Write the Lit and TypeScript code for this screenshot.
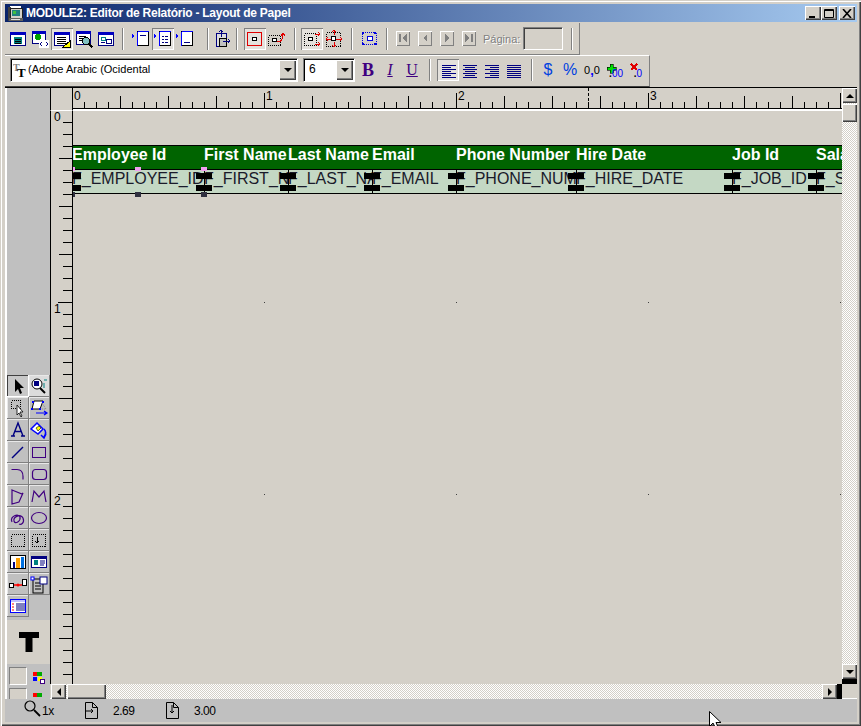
import { LitElement, html, svg, css } from 'lit';
import { customElement } from 'lit/decorators.js';

const NAVY = '#000080';
const BLUE = '#0000ff';
const RED = '#ff0000';
const PURPLE = '#400080';

// small shared pieces for the 20x20 toolbar icons
const win = (x = 2, y = 3, w = 16, h = 14) => svg`
  <rect x=${x + 0.5} y=${y + 0.5} width=${w - 1} height=${h - 1} fill="#fff" stroke=${NAVY}/>
  <rect x=${x} y=${y} width=${w} height="3" fill="#0000c0"/>
`;
const lines = (x: number, y: number, w: number, n: number, c = '#000', step = 2) => {
  const out = [];
  for (let i = 0; i < n; i++) out.push(svg`<rect x=${x} y=${y + i * step} width=${w} height="1" fill=${c}/>`);
  return out;
};
const dotted = (x: number, y: number, w: number, h: number, c = '#000') => svg`
  <rect x=${x + 0.5} y=${y + 0.5} width=${w} height=${h} fill="none" stroke=${c} stroke-dasharray="1 1" shape-rendering="crispEdges"/>
`;
const sideDoc = (body: unknown) => svg`
  <path d="M1 5l3 2-3 2z" fill=${BLUE}/>
  <rect x="6.5" y="2.5" width="11" height="14" fill="#fff" stroke="#000"/>
  <path d="M6.5 2.5h11M6.5 2.5v14" stroke=${BLUE} fill="none"/>
  ${body}
`;
// justified lines, every second one short
const aligned = (x: number, shortX: number, shortW: number) => {
  const out = [];
  for (let i = 0; i < 7; i++) {
    out.push(i % 2 ? svg`<rect x=${shortX} y=${5 + i * 2} width=${shortW} height="1" fill=${NAVY}/>`
                   : svg`<rect x=${x} y=${5 + i * 2} width="14" height="1" fill=${NAVY}/>`);
  }
  return out;
};

const ICONS: Record<string, unknown> = {
  form: svg`${win()}<rect x="6" y="8" width="8" height="7" fill="#008080"/><path d="M7 10h6M7 12h6M7 14h6" stroke="#000"/>`,
  web: svg`${win(2, 2, 14, 13)}<circle cx="8" cy="8" r="3" fill="#00a000"/><rect x="9" y="11" width="10" height="8" fill="#fff"/><path d="M12 13l-2 2 2 2M16 13l2 2-2 2" stroke=${NAVY} fill="none"/>`,
  report: svg`${win()}${lines(5, 8, 9, 4)}<path d="M18 12v6h-7z" fill="#ffff00" stroke="#000"/>`,
  preview: svg`${win(2, 2, 15, 14)}${lines(5, 7, 7, 3)}<circle cx="12" cy="12" r="3.5" fill="#80c0c0" stroke="#000"/><path d="M14.5 14.5l4 4" stroke="#000" stroke-width="2"/>`,
  layout: svg`${win()}<rect x="5.5" y="8.5" width="4" height="3" fill="#fff" stroke="#008080"/><rect x="10.5" y="10.5" width="5" height="4" fill="#fff" stroke=${NAVY}/><path d="M5 13h4" stroke=${NAVY}/>`,
  marginTop: sideDoc(svg`<path d="M9 6h6" stroke=${NAVY}/>`),
  marginBody: sideDoc(svg`<path d="M9 7h2M12 7h3M9 10h2M12 10h3M9 13h2M12 13h3" stroke=${NAVY}/>`),
  marginBottom: sideDoc(svg`<path d="M9 13h6" stroke=${NAVY}/>`),
  anchor: svg`<rect x="5.5" y="4.5" width="10" height="13" fill="#ddd" stroke=${NAVY}/><rect x="8" y="9" width="7" height="8" fill="#c0c0c0" stroke="#000"/><path d="M10 1v7M8 3l2-2 2 2M12 12h7M17 10l2 2-2 2" stroke=${NAVY} fill="none"/>`,
  frame: svg`<rect x="2.5" y="3.5" width="14" height="13" fill="none" stroke="#e00000"/><rect x="7.5" y="8.5" width="4" height="3" fill="#fff" stroke="#000"/>`,
  frameCurve: svg`${dotted(1, 6, 12, 10)}<rect x="5.5" y="9.5" width="4" height="3" fill="#fff" stroke="#000"/><path d="M10 13c5 0 6-3 6-7M14 7l2-3 2 3" stroke="#e00000" fill="none"/>`,
  expandRight: svg`${dotted(2, 4, 12, 12)}<rect x="6.5" y="8.5" width="4" height="3" fill="#fff" stroke="#000"/><path d="M13 5h5M16 3l2 2-2 2M13 15h5M16 13l2 2-2 2" stroke="#e00000" fill="none"/>`,
  expandAll: svg`${dotted(2, 3, 14, 14, '#000')}<rect x="7.5" y="7.5" width="4" height="4" fill="#fff" stroke="#000"/><path d="M10 1v5M8 3l2-2 2 2M10 13v5M8 16l2 2 2-2M2 10h5M4 8l-2 2 2 2M12 10h6M16 8l2 2-2 2" stroke="#e00000" fill="none"/>`,
  blueFrame: svg`${dotted(3, 3, 14, 12, '#0000e0')}<rect x="8.5" y="7.5" width="5" height="4" fill="#fff" stroke="#0000e0"/><path d="M3 3h2v2h-2zM15 3h2v2h-2zM3 14h2v2h-2zM15 14h2v2h-2z" fill="#0000e0"/>`,
  // first four are drawn on the 14px face of the page buttons
  first: svg`<path d="M3 3h2v8H3zM11 3v8L6 7z" fill="#808080"/>`,
  prev: svg`<path d="M9 3v8L5 7z" fill="#808080"/>`,
  next: svg`<path d="M5 3v8l4-4z" fill="#808080"/>`,
  last: svg`<path d="M9 3h2v8H9zM3 3v8l5-4z" fill="#808080"/>`,
  alignLeft: aligned(4, 4, 9),
  alignCenter: aligned(3, 5, 10),
  alignRight: aligned(3, 8, 9),
  alignFull: lines(3, 5, 14, 7, NAVY),
  plusDec: svg`<path d="M6 4h3v3h3v3H9v3H6v-3H3V7h3z" fill="#00e000" stroke="#000" stroke-width=".6"/>`,
  crossDec: svg`<path d="M5 4l6 6M11 4l-6 6" stroke="#e00000" stroke-width="2.500"/>`,
  // tool palette
  pointer: svg`<path d="M7 3v13l3-3 2 5 2-1-2-5h4z" fill="#000"/>`,
  zoom: svg`<circle cx="8" cy="8" r="5" fill="#fff" stroke="#000"/><rect x="5" y="5" width="5" height="5" fill=${NAVY}/><path d="M11 12l5 5" stroke="#000" stroke-width="2"/><path d="M15 4h3M15 7v5" stroke="#008080"/>`,
  marquee: svg`${dotted(3, 2, 9, 8)}<path d="M9 7v10l2-2 2 4 1-1-2-4h3z" fill="#fff" stroke="#000" stroke-width=".8"/>`,
  rotate: svg`<path d="M5 3h9l-3 8H3z" fill="#fff" stroke="#000"/><path d="M3 3h2v2H3zM13 3h2v2h-2zM2 10h2v2H2zM10 10h2v2h-2z" fill=${BLUE}/><path d="M13 5l4 6h-5" fill="none" stroke="#808080" stroke-dasharray="1 1"/><path d="M7 15h10M15 13l3 2-3 2" stroke=${BLUE} fill="none" stroke-width="1.200"/>`,
  text: svg`<path d="M3 16h4M13 16h4M5 16L10 3l5 13M7 11.500h6" stroke=${NAVY} fill="none" stroke-width="1.400"/>`,
  fill: svg`<path d="M2 9l6-6 6 6-5 5z" fill="#fff" stroke=${BLUE} stroke-width="1.500"/><path d="M7 8l3-2 2 2-3 3z" fill="#ffff00" stroke="#000" stroke-width=".6"/><path d="M15 9c2 2 2 5 0 8M12 15l3 3 2-4" fill="none" stroke=${BLUE} stroke-width="1.500"/>`,
  line: svg`<path d="M4 16L15 5" stroke=${NAVY} stroke-width="1.400"/>`,
  rect: svg`<rect x="3.5" y="5.500" width="13" height="10" fill="none" stroke=${PURPLE}/>`,
  arc: svg`<path d="M3.500 5.500H9c4 0 6 3 6 7v3" fill="none" stroke=${PURPLE} stroke-width="1.200"/>`,
  round: svg`<rect x="3.500" y="5.500" width="14" height="10" rx="3" fill="none" stroke=${PURPLE} stroke-width="1.200"/>`,
  poly: svg`<path d="M4 4l10 4 1-1-4 9-7 2z" fill="none" stroke=${PURPLE} stroke-width="1.200"/>`,
  polyline: svg`<path d="M3 16l2-11 5 6 5-6 2 11" fill="none" stroke=${PURPLE} stroke-width="1.200"/>`,
  freehand: svg`<path d="M4 14c-3-6 7-9 8-5s-5 8-6 4 7-8 9-3-2 7-4 6" fill="none" stroke=${PURPLE} stroke-width="1.200"/>`,
  ellipse: svg`<ellipse cx="10" cy="10" rx="7.500" ry="5.500" fill="none" stroke=${PURPLE} stroke-width="1.200"/>`,
  frameTool: svg`${dotted(3, 4, 13, 12)}`,
  repeat: svg`${dotted(3, 4, 13, 12)}<path d="M8 7v6M6 11l2 2 2-2" stroke="#000" fill="none" shape-rendering="crispEdges"/>`,
  chart: svg`<rect x="2.500" y="3.500" width="15" height="13" fill="#fff" stroke="#000"/><rect x="5" y="10" width="2" height="6" fill=${NAVY}/><rect x="8" y="6" width="4" height="10" fill="#ffa000"/><rect x="13" y="5" width="3" height="11" fill="#0070e0"/>`,
  field: svg`<rect x="2.500" y="4.500" width="15" height="11" fill="#fff" stroke=${NAVY}/><rect x="3" y="5" width="14" height="2" fill=${NAVY}/><rect x="5" y="8" width="4" height="5" fill="#008080"/><path d="M11 9h5M11 11h5M11 13h4" stroke=${NAVY}/>`,
  link: svg`<rect x="1.500" y="9.500" width="4" height="4" fill="#fff" stroke="#000"/><rect x="14.500" y="5.500" width="4" height="6" fill="#fff" stroke="#000"/><path d="M6 11h8" stroke=${RED} stroke-width="1.500"/><circle cx="10" cy="11" r="1.500" fill=${RED}/>`,
  ole: svg`<rect x="4" y="5" width="10" height="14" fill="#c0c0c0" stroke="#000"/><path d="M6 9h6M6 12h6M6 15h6" stroke="#000"/><rect x="11" y="3" width="7" height="7" fill="#fff" stroke=${NAVY}/><rect x="2" y="3" width="3" height="3" fill="#fff" stroke=${BLUE}/>`,
  table: svg`<rect x="2.500" y="3.500" width="15" height="13" fill="#fff" stroke=${BLUE}/><rect x="3" y="4" width="14" height="2" fill="#c0c0ff"/><path d="M4 8h2M4 11h2M4 14h2" stroke=${RED}/><path d="M8 8h9M8 10h9M8 12h9M8 14h9" stroke=${NAVY}/>`,
  // status bar
  lens: svg`<circle cx="6" cy="6" r="5" fill="none" stroke="#000" stroke-width="1.200"/><path d="M10 10l6 6" stroke="#000" stroke-width="1.800"/>`,
  pageW: svg`<path d="M.5.500h7l5 5v11H.5zM7.500.500v5h5M1 9h7M6 7l2 2-2 2" fill="none" stroke="#000"/>`,
  pageH: svg`<path d="M.5.500h7l5 5v11H.5zM7.500.500v5h5M6 3v8M4 9l2 2 2-2" fill="none" stroke="#000"/>`,
};

const icon = (name: string) => html`<svg class="ico" viewBox="0 0 20 20">${ICONS[name]}</svg>`;

type Tool = { icon?: string; down?: boolean; sep?: [number, number] };

// sep = [space before, space after]
const ROW1: Tool[] = [
  { icon: 'form' }, { icon: 'web' }, { icon: 'report', down: true }, { icon: 'preview' }, { icon: 'layout' },
  { sep: [5, 6] },
  { icon: 'marginTop' }, { icon: 'marginBody', down: true }, { icon: 'marginBottom' },
  { sep: [11, 1] },
  { icon: 'anchor' },
  { sep: [4, 6] },
  { icon: 'frame', down: true }, { icon: 'frameCurve' },
  { sep: [6, 5] },
  { icon: 'expandRight', down: true }, { icon: 'expandAll' },
  { sep: [6, 5] },
  { icon: 'blueFrame' },
  { sep: [6, 4] },
];
const NAV = ['first', 'prev', 'next', 'last'];
const ALIGN = ['alignLeft', 'alignCenter', 'alignRight', 'alignFull'];

const PALETTE = [
  'pointer', 'zoom', 'marquee', 'rotate', 'text', 'fill', 'line', 'rect', 'arc', 'round',
  'poly', 'polyline', 'freehand', 'ellipse', 'frameTool', 'repeat', 'chart', 'field', 'link', 'ole', 'table',
];

const COLUMNS = [
  { title: 'Employee Id', field: 'F_EMPLOYEE_ID', width: 132 },
  { title: 'First Name', field: 'F_FIRST_NAME', width: 84 },
  { title: 'Last Name', field: 'F_LAST_NAME', width: 84 },
  { title: 'Email', field: 'F_EMAIL', width: 84 },
  { title: 'Phone Number', field: 'F_PHONE_NUMBER', width: 120 },
  { title: 'Hire Date', field: 'F_HIRE_DATE', width: 156 },
  { title: 'Job Id', field: 'F_JOB_ID', width: 84 },
  { title: 'Salary', field: 'F_SALARY', width: 84 },
];

const CANVAS_X = 73;
const CANVAS_Y = 110;
const ORIGIN_X = 72;
const ORIGIN_Y = 109;

@customElement('app-root')
export class AppRoot extends LitElement {
  static styles = css`
    :host {
      display: block;
      width: 861px;
      height: 726px;
      font-family: 'Liberation Sans', Arial, sans-serif;
    }
    .window {
      position: relative;
      box-sizing: border-box;
      width: 861px;
      height: 726px;
      padding: 4px 4px 4px 5px;
      background: #d4d0c8;
      box-shadow: inset 1px 1px 0 #d4d0c8, inset 2px 2px 0 #fff, inset -1px -1px 0 #404040, inset -2px -2px 0 #808080;
      overflow: hidden;
    }
    .title {
      height: 18px;
      display: flex;
      align-items: center;
      padding: 0 2px;
      gap: 2px;
      background: linear-gradient(90deg, #0a246a, #a6caf0);
      color: #fff;
      font-size: 12px;
      letter-spacing: -0.25px;
      font-weight: bold;
      white-space: nowrap;
    }
    .title-ico { width: 17px; height: 17px; flex: none; }
    .title-text { flex: 1; }
    .caps { display: flex; }
    .cap {
      box-sizing: border-box;
      width: 16px;
      height: 14px;
      background: #d4d0c8;
      box-shadow: inset 1px 1px 0 #fff, inset -1px -1px 0 #404040, inset -2px -2px 0 #808080;
      display: flex;
      align-items: center;
      justify-content: center;
    }
    .cap svg { width: 10px; height: 9px; display: block; }
    .cap.close { margin-left: 2px; }

    .bar {
      box-sizing: border-box;
      display: flex;
      align-items: center;
      height: 32px;
      border-top: 1px solid #fff;
      border-right: 1px solid #808080;
      border-bottom: 1px solid #808080;
    }
    .row1 { width: 575px; margin-top: 1px; padding: 0 0 0 2px; border-top: 0; }
    .row2 { width: 645px; padding: 0 0 2px 4px; border-bottom-color: #404040; }
    .btn {
      flex: none;
      box-sizing: border-box;
      width: 22px;
      height: 22px;
      display: flex;
      align-items: center;
      justify-content: center;
    }
    .btn.down {
      background: #e4e1dc;
      box-shadow: inset 1px 1px 0 #808080, inset -1px -1px 0 #fff;
    }
    .ico { width: 20px; height: 20px; display: block; shape-rendering: crispEdges; }
    .sep {
      flex: none;
      box-sizing: border-box;
      width: 2px;
      height: 22px;
      border-left: 1px solid #808080;
      border-right: 1px solid #fff;
    }
    .nav-face {
      box-sizing: border-box;
      width: 14px;
      height: 15px;
      box-shadow: inset 1px 1px 0 #fff, inset -1px -1px 0 #808080;
    }
    .nav-ico { display: block; width: 14px; height: 14px; shape-rendering: crispEdges; }
    .page-label {
      width: 40px;
      margin-left: 3px;
      font-size: 11px;
      color: #808080;
      text-shadow: 1px 1px 0 #fff;
    }
    .page-box {
      box-sizing: border-box;
      width: 40px;
      height: 23px;
      border: 1px solid #808080;
      border-right-color: #fff;
      border-bottom-color: #fff;
      box-shadow: inset 1px 1px 0 #404040;
      margin-right: 8px;
    }
    .combo {
      box-sizing: border-box;
      flex: none;
      height: 24px;
      display: flex;
      align-items: center;
      background: #fff;
      border: 1px solid #808080;
      border-right-color: #fff;
      border-bottom-color: #fff;
      box-shadow: inset 1px 1px 0 #000;
      padding: 1px;
      font-size: 11px;
      color: #000;
    }
    .font-combo { width: 288px; margin-left: 1px; }
    .size-combo { width: 52px; margin-left: 5px; font-size: 12px; }
    .tt { width: 14px; height: 14px; flex: none; margin-left: 1px; }
    .combo-text { flex: 1; padding: 0 0 3px 1px; white-space: nowrap; overflow: hidden; }
    .size-combo .combo-text { padding-left: 4px; }
    .drop {
      box-sizing: border-box;
      flex: none;
      width: 17px;
      height: 20px;
      background: #d4d0c8;
      box-shadow: inset 1px 1px 0 #fff, inset -1px -1px 0 #404040, inset -2px -2px 0 #808080;
      display: flex;
      align-items: center;
      justify-content: center;
    }
    .tri-down { width: 0; height: 0; border: 4px solid transparent; border-top: 4px solid #000; border-bottom: 0; }
    .tri-up { width: 0; height: 0; border: 4px solid transparent; border-bottom: 4px solid #000; border-top: 0; }
    .tri-left { width: 0; height: 0; border: 4px solid transparent; border-right: 4px solid #000; border-left: 0; }
    .tri-right { width: 0; height: 0; border: 4px solid transparent; border-left: 4px solid #000; border-right: 0; }
    .style-btn { font-family: 'Liberation Serif', serif; color: #400080; }
    .b { font-weight: bold; font-size: 18px; margin-left: 2px; }
    .i { font-style: italic; font-size: 16px; text-decoration: underline; text-decoration-thickness: 1px; }
    .u { text-decoration: underline; text-decoration-thickness: 1px; font-size: 16px; }
    .sep-fmt { margin: 0 6px 0 6px; }
    .sep-num { margin: 0 4px 0 6px; }
    .money, .pct { color: #0040e0; font-size: 16px; }
    .dec { font-size: 11px; color: #000; white-space: nowrap; }
    .dec b { color: #0000ff; font-size: 13px; }
    .dec-wrap { position: relative; }
    .dec-wrap .ico { position: absolute; left: 1px; top: 1px; }
    .dec-low { position: absolute; bottom: 2px; font-size: 10px; color: #0000ff; white-space: nowrap; }
    .dec-low.plus { right: 2px; }
    .dec-low.cross { right: 5px; }
    .dec-low i { font-style: normal; color: #000; font-weight: bold; }

    .work {
      height: 611px;
      display: grid;
      grid-template-columns: 45px 23px 769px 15px;
      grid-template-rows: 23px 573px 15px;
      border-top: 1px solid #000;
      box-sizing: border-box;
    }
    .palette {
      grid-row: 1 / 4;
      box-sizing: border-box;
      border-left: 2px solid #fff;
      background: #c0c0c0;
      display: flex;
      flex-direction: column;
      padding-top: 287px;
      overflow: hidden;
    }
    .tools { flex: none; display: grid; grid-template-columns: 22px 21px; grid-auto-rows: 22px; }
    .tool {
      box-sizing: border-box;
      border-right: 1px solid #808080;
      border-bottom: 1px solid #808080;
      box-shadow: inset 1px 1px 0 #e8e8e8;
      display: flex;
      align-items: center;
      justify-content: center;
    }
    .tool .ico { width: 20px; height: 20px; shape-rendering: auto; }
    .tool.down { background: #c8c8c8; box-shadow: inset 1px 1px 0 #404040; border-color: #fff; }
    .tool.hot { background: #dcdcdc; }
    .sample {
      flex: none;
      margin-top: 3px;
      height: 44px;
      background: #d4d0c8;
      display: flex;
      align-items: center;
      justify-content: center;
    }
    .sample svg { width: 22px; height: 22px; margin-top: 2px; }
    .swatches { flex: none; display: grid; grid-template-columns: 18px 1fr; grid-auto-rows: 21px; padding: 3px 0 0 2px; }
    .swatch {
      box-sizing: border-box;
      width: 18px;
      height: 18px;
      background: #d4d0c8;
      border: 1px solid #808080;
      border-right-color: #fff;
      border-bottom-color: #fff;
    }
    .swatch-ico { width: 14px; height: 14px; margin: 5px 0 0 6px; display: block; shape-rendering: crispEdges; }
    .corner {
      box-sizing: border-box;
      background: #d4d0c8;
      border-left: 1px solid #000;
      border-right: 1px solid #000;
      border-bottom: 1px solid #fff;
    }
    .hruler { position: relative; background: #d4d0c8; overflow: hidden; }
    .vruler {
      position: relative;
      box-sizing: border-box;
      background: #d4d0c8;
      border-left: 1px solid #000;
      border-right: 1px solid #000;
      overflow: hidden;
    }
    .ruler-svg { display: block; }
    .ruler-num { font: 12px 'Liberation Sans', sans-serif; fill: #000; }
    .canvas { position: relative; overflow: hidden; background: #d4d0c8; padding-top: 35px; }
    .band { display: flex; width: 800px; margin-left: -1px; }
    .head {
      height: 23px;
      background: #006400;
      border-top: 1px solid #000;
      border-bottom: 1px solid #000;
      margin-top: -1px;
    }
    .head-cell {
      flex: none;
      box-sizing: border-box;
      line-height: 17px;
      font-size: 16px;
      font-weight: bold;
      color: #fff;
      white-space: nowrap;
      overflow: hidden;
    }
    .data { height: 23px; background: #c4d8c4; border-bottom: 1px solid #000; }
    .data-cell {
      flex: none;
      box-sizing: border-box;
      box-shadow: inset 1px 0 0 #000;
      line-height: 17px;
      font-size: 16px;
      color: #1a1a2a;
      white-space: nowrap;
      overflow: hidden;
    }
    .grip { position: absolute; top: 62px; width: 16px; height: 18px; }
    .grip::before, .grip::after {
      content: '';
      position: absolute;
      left: 0;
      width: 16px;
      height: 6px;
      background: #000;
    }
    .grip::before { top: 0; }
    .grip::after { bottom: 0; }
    .grip-first { width: 8px; }
    .grip-first::before, .grip-first::after { width: 8px; }
    .mark { position: absolute; width: 6px; }
    .mark.pink { top: 56px; height: 4px; background: #f0a0f0; }
    .mark.dark { top: 81px; height: 5px; background: #303040; }
    .mark.narrow { width: 2px; }
    .dot { position: absolute; width: 1px; height: 1px; background: #404040; }
    .vscroll {
      grid-row: 1 / 3;
      grid-column: 4;
      display: flex;
      flex-direction: column;
      background: repeating-conic-gradient(#fff 0 25%, #d4d0c8 0 50%) 0 0 / 2px 2px;
    }
    .sb-btn {
      box-sizing: border-box;
      flex: none;
      width: 15px;
      height: 15px;
      background: #d4d0c8;
      box-shadow: inset 1px 1px 0 #fff, inset -1px -1px 0 #404040, inset -2px -2px 0 #808080;
      display: flex;
      align-items: center;
      justify-content: center;
    }
    .v-thumb {
      box-sizing: border-box;
      flex: none;
      height: 18px;
      margin-top: 1px;
      background: #d4d0c8;
      box-shadow: inset 1px 1px 0 #fff, inset -1px -1px 0 #404040, inset -2px -2px 0 #808080;
    }
    .grow { flex: 1; }
    .v-end { flex: none; height: 5px; background: #000; }
    .hscroll { grid-column: 2 / 4; grid-row: 3; display: flex; padding-left: 1px; }
    .h-track { flex: 1; display: flex; background: repeating-conic-gradient(#fff 0 25%, #d4d0c8 0 50%) 0 0 / 2px 2px; }
    .h-thumb {
      box-sizing: border-box;
      flex: none;
      width: 39px;
      margin-left: 1px;
      background: #d4d0c8;
      box-shadow: inset 1px 1px 0 #fff, inset -1px -1px 0 #404040, inset -2px -2px 0 #808080;
    }
    .h-end { flex: none; width: 5px; background: #000; }
    .status {
      box-sizing: border-box;
      height: 24px;
      display: flex;
      align-items: center;
      background: #c0c0c0;
      border-top: 1px solid #fff;
      font-size: 12px;
      letter-spacing: -0.5px;
      color: #000;
    }
    .status svg { display: block; flex: none; }
    .s-lens { width: 18px; height: 18px; margin: -4px 0 0 19px; }
    .s-zoom { width: 43px; }
    .s-page { width: 13px; height: 17px; overflow: visible; }
    .s-val { width: 68px; padding-left: 15px; box-sizing: border-box; }
    .cursor { position: absolute; left: 709px; top: 711px; width: 12px; height: 15px; }
  `;

  private renderRow1() {
    return ROW1.map(t =>
      t.sep
        ? html`<span class="sep" style="margin:0 ${t.sep[1]}px 0 ${t.sep[0]}px"></span>`
        : html`<span class="btn ${t.down ? 'down' : ''}">${icon(t.icon!)}</span>`
    );
  }

  private hTicks() {
    const out = [];
    for (let i = 0; i * 12 < 780; i++) {
      const x = i * 12 + ORIGIN_X - CANVAS_X;
      const top = i % 16 === 0 ? 5 : i % 4 === 0 ? 8 : 14;
      out.push(svg`<rect x=${x} y=${top} width="1" height=${20 - top} fill="#000"/>`);
    }
    return out;
  }

  private vTicks() {
    const out = [];
    for (let i = 1; i * 12 < 580; i++) {
      const y = i * 12 + ORIGIN_Y - CANVAS_Y;
      const left = i % 16 === 0 ? 7 : i % 4 === 0 ? 8 : 12;
      out.push(svg`<rect x=${left} y=${y} width=${21 - left} height="1" fill="#000"/>`);
    }
    return out;
  }

  private renderCanvas() {
    let x = ORIGIN_X - CANVAS_X;
    const starts = COLUMNS.map(c => {
      const s = x;
      x += c.width;
      return s;
    });
    const dots = [];
    for (const y of [301, 493]) {
      for (const dx of [264, 456, 648, 840]) {
        dots.push(html`<span class="dot" style="left:${dx - CANVAS_X}px;top:${y - CANVAS_Y}px"></span>`);
      }
    }
    return html`
      <div class="canvas">
        <div class="band head">
          ${COLUMNS.map(c => html`<div class="head-cell" style="width:${c.width}px">${c.title}</div>`)}
        </div>
        <div class="band data">
          ${COLUMNS.map(c => html`<div class="data-cell" style="width:${c.width}px">${c.field}</div>`)}
        </div>
        ${dots}
        <span class="grip grip-first" style="left:0"></span>
        ${starts.slice(1).map(s => html`<span class="grip" style="left:${s - 8}px"></span>`)}
        ${[0, 66, 132].map(d => html`
          <span class="mark pink ${d === 0 ? 'narrow' : ''}" style="left:${d === 0 ? 0 : d - 4}px"></span>
          <span class="mark dark ${d === 0 ? 'narrow' : ''}" style="left:${d === 0 ? 0 : d - 4}px"></span>
        `)}
      </div>
    `;
  }

  render() {
    return html`
      <div class="window">
        <div class="title">
          <svg class="title-ico" viewBox="0 0 17 17" shape-rendering="crispEdges">
            <rect x="3" y="1" width="11" height="2" fill="#fff"/>
            <rect x="1" y="2" width="3" height="14" fill="#404040"/>
            <rect x="3" y="3" width="12" height="10" fill="#d4d0c8" stroke="#202020"/>
            <rect x="5" y="5" width="8" height="6" fill="#208080"/>
            <rect x="6" y="6" width="3" height="3" fill="#40c040"/>
            <rect x="2" y="13" width="14" height="3" fill="#606060"/>
            <rect x="4" y="14" width="9" height="1" fill="#e0e0e0"/>
          </svg>
          <span class="title-text">MODULE2: Editor de Relatório - Layout de Papel</span>
          <div class="caps">
            <span class="cap"><svg viewBox="0 0 10 9"><rect x="1" y="7" width="6" height="2" fill="#000"/></svg></span>
            <span class="cap"><svg viewBox="0 0 10 9"><path d="M.5.500h9v8h-9zM0 1.500h10" fill="none" stroke="#000"/></svg></span>
            <span class="cap close"><svg viewBox="0 0 10 9"><path d="M1 0l8 9M9 0L1 9" stroke="#000" stroke-width="1.600"/></svg></span>
          </div>
        </div>

        <div class="bar row1">
          ${this.renderRow1()}
          ${NAV.map(n => html`
            <span class="btn"><span class="nav-face"><svg class="nav-ico" viewBox="0 0 14 14">${ICONS[n]}</svg></span></span>
          `)}
          <span class="page-label">Página:</span>
          <span class="page-box"></span>
          <span class="sep"></span>
        </div>

        <div class="bar row2">
          <div class="combo font-combo">
            <svg class="tt" viewBox="0 0 14 14">
              <text x="0" y="8" font-family="Liberation Serif" font-size="10" font-weight="bold" fill="#808080">T</text>
              <text x="4" y="14" font-family="Liberation Serif" font-size="13" font-weight="bold" fill="#000">T</text>
            </svg>
            <span class="combo-text">(Adobe Arabic (Ocidental</span>
            <span class="drop"><span class="tri-down"></span></span>
          </div>
          <div class="combo size-combo">
            <span class="combo-text">6</span>
            <span class="drop"><span class="tri-down"></span></span>
          </div>
          <span class="btn style-btn b">B</span>
          <span class="btn style-btn i">I</span>
          <span class="btn style-btn u">U</span>
          <span class="sep sep-fmt"></span>
          ${ALIGN.map((a, i) => html`<span class="btn ${i === 0 ? 'down' : ''}">${icon(a)}</span>`)}
          <span class="sep sep-num"></span>
          <span class="btn money">$</span>
          <span class="btn pct">%</span>
          <span class="btn dec">0<b>,</b>0</span>
          <span class="btn dec-wrap">${icon('plusDec')}<span class="dec-low plus"><i>.</i>00</span></span>
          <span class="btn dec-wrap">${icon('crossDec')}<span class="dec-low cross"><i>.</i>0</span></span>
        </div>

        <div class="work">
          <div class="palette">
            <div class="tools">
              ${PALETTE.map((p, i) => html`
                <span class="tool ${i === 0 ? 'down' : ''} ${i === 1 ? 'hot' : ''}">${icon(p)}</span>
              `)}
            </div>
            <div class="sample">
              <svg viewBox="0 0 22 22"><rect x="1" y="0" width="20" height="6" fill="#000"/><rect x="7.500" y="0" width="7" height="20" fill="#000"/></svg>
            </div>
            <div class="swatches">
              <span class="swatch"></span>
              <svg class="swatch-ico" viewBox="0 0 14 14">
                <rect x="0" y="0" width="4" height="4" fill="#f00"/><rect x="4" y="0" width="5" height="4" fill="#0a0"/>
                <rect x="0" y="5" width="4" height="4" fill="#00f"/><rect x="5" y="5" width="4" height="4" fill="#ff0"/>
                <rect x="7.500" y="7.500" width="4" height="4" fill="#fff" stroke=${PURPLE}/>
              </svg>
              <span class="swatch"></span>
              <svg class="swatch-ico" viewBox="0 0 14 14">
                <rect x="0" y="0" width="4" height="4" fill="#f00"/><rect x="4" y="0" width="5" height="4" fill="#0a0"/>
              </svg>
            </div>
          </div>
          <div class="corner"></div>
          <div class="hruler">
            <svg class="ruler-svg" width="769" height="23">
              ${this.hTicks()}
              ${[0, 1, 2, 3].map(n => svg`<text class="ruler-num" x=${n * 192 + 1} y="12">${n}</text>`)}
              <path d="M515.500 0v20" stroke="#000" stroke-dasharray="3 2"/>
              <rect x="0" y="20" width="769" height="1" fill="#000"/>
              <rect x="0" y="21" width="769" height="2" fill="#fff"/>
            </svg>
          </div>
          <div class="vscroll">
            <span class="sb-btn"><span class="tri-up"></span></span>
            <span class="v-thumb"></span>
            <span class="grow"></span>
            <span class="sb-btn"><span class="tri-down"></span></span>
            <span class="v-end"></span>
          </div>
          <div class="vruler">
            <svg class="ruler-svg" width="21" height="573">
              ${this.vTicks()}
              ${[0, 1, 2].map(n => svg`<text class="ruler-num" x="3" y=${n * 192 + 10}>${n}</text>`)}
            </svg>
          </div>
          ${this.renderCanvas()}
          <div class="hscroll">
            <span class="sb-btn"><span class="tri-left"></span></span>
            <div class="h-track">
              <span class="h-thumb"></span>
            </div>
            <span class="sb-btn"><span class="tri-right"></span></span>
            <span class="h-end"></span>
          </div>
        </div>

        <div class="status">
          <svg class="s-lens" viewBox="0 0 18 18">${ICONS.lens}</svg>
          <span class="s-zoom">1x</span>
          <svg class="s-page" viewBox="0 0 13 17">${ICONS.pageW}</svg>
          <span class="s-val">2.69</span>
          <svg class="s-page" viewBox="0 0 13 17">${ICONS.pageH}</svg>
          <span class="s-val">3.00</span>
        </div>

        <svg class="cursor" viewBox="0 0 12 15">
          <path d="M.5.500v15l3.500-3.500 2 4h3l-2-4.500h5z" fill="#fff" stroke="#000"/>
        </svg>
      </div>
    `;
  }
}
